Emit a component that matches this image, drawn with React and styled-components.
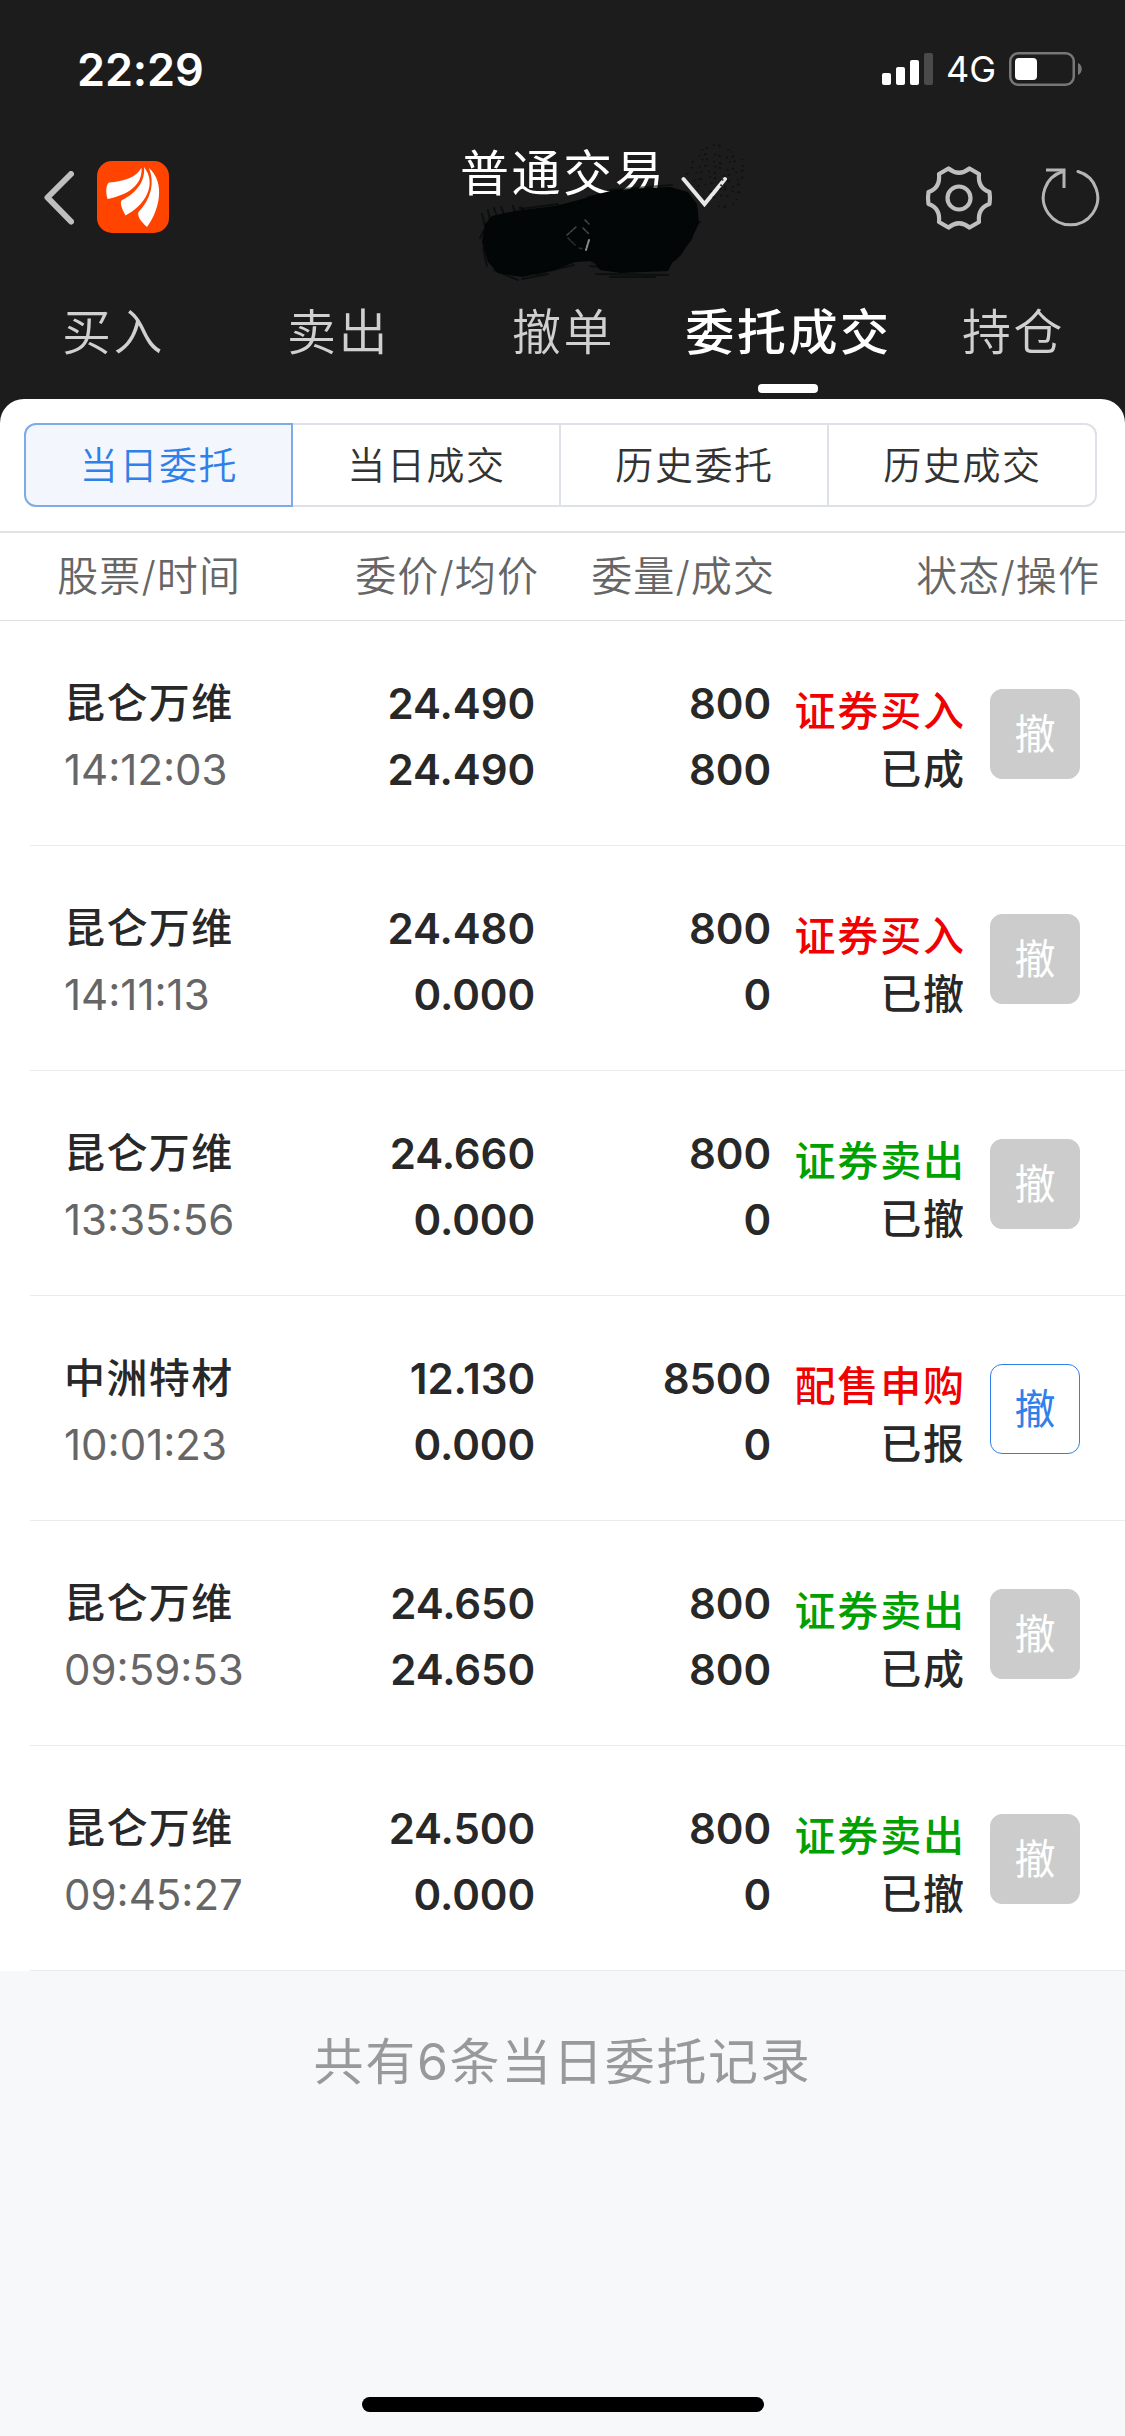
import React, { useState } from 'react';
import styled, { createGlobalStyle } from 'styled-components';

const tabs = ['买入', '卖出', '撤单', '委托成交', '持仓'];
const segments = ['当日委托', '当日成交', '历史委托', '历史成交'];

const orders = [
  { id: 1, name: '昆仑万维', time: '14:12:03', price: '24.490', avg: '24.490', qty: '800', filled: '800', side: 'buy', type: '证券买入', status: '已成' },
  { id: 2, name: '昆仑万维', time: '14:11:13', price: '24.480', avg: '0.000', qty: '800', filled: '0', side: 'buy', type: '证券买入', status: '已撤' },
  { id: 3, name: '昆仑万维', time: '13:35:56', price: '24.660', avg: '0.000', qty: '800', filled: '0', side: 'sell', type: '证券卖出', status: '已撤' },
  { id: 4, name: '中洲特材', time: '10:01:23', price: '12.130', avg: '0.000', qty: '8500', filled: '0', side: 'buy', type: '配售申购', status: '已报', open: true },
  { id: 5, name: '昆仑万维', time: '09:59:53', price: '24.650', avg: '24.650', qty: '800', filled: '800', side: 'sell', type: '证券卖出', status: '已成' },
  { id: 6, name: '昆仑万维', time: '09:45:27', price: '24.500', avg: '0.000', qty: '800', filled: '0', side: 'sell', type: '证券卖出', status: '已撤' },
];

function App() {

  const [activeTab, setActiveTab] = useState('委托成交');
  const [activeSegment, setActiveSegment] = useState('当日委托');

  return (
    <Screen>
      <GlobalStyle />
      <StatusBar>
        <Clock>22:29</Clock>
        <StatusIcons>
          <SignalIcon />
          <Network>4G</Network>
          <BatteryIcon />
        </StatusIcons>
      </StatusBar>

      <Header>
        <BackIcon />
        <LogoIcon />
        <Title>普通交易</Title>
        <ChevronIcon />
        <GearIcon />
        <RefreshIcon />
        <Scribble />
      </Header>

      <Tabs>
        {tabs.map((tab) => (
          <Tab key={tab} $active={tab === activeTab} onClick={() => setActiveTab(tab)}>
            {tab}
          </Tab>
        ))}
      </Tabs>

      <Panel>
        <Segments>
          {segments.map((item) => (
            <Segment key={item} $active={item === activeSegment} onClick={() => setActiveSegment(item)}>
              {item}
            </Segment>
          ))}
        </Segments>

        <TableHead>
          <span>股票/时间</span>
          <span>委价/均价</span>
          <span>委量/成交</span>
          <span>状态/操作</span>
        </TableHead>

        {orders.map((order) => (
          <Row key={order.id}>
            <Cell $left>
              <Name>{order.name}</Name>
              <Time>{order.time}</Time>
            </Cell>
            <Cell>
              <Num>{order.price}</Num>
              <Num>{order.avg}</Num>
            </Cell>
            <Cell>
              <Num>{order.qty}</Num>
              <Num>{order.filled}</Num>
            </Cell>
            <StatusCell>
              <Side $side={order.side}>{order.type}</Side>
              <div>{order.status}</div>
            </StatusCell>
            <CancelButton disabled={!order.open}>撤</CancelButton>
          </Row>
        ))}
      </Panel>

      <Summary>共有6条当日委托记录</Summary>
      <HomeIndicator />
    </Screen>
  );
}

function SignalIcon() {
  return (
    <svg width="51" height="33" viewBox="0 0 51 33" fill="#fff">
      <rect x="0" y="20" width="9" height="12" rx="2" />
      <rect x="14" y="14" width="9" height="18" rx="2" />
      <rect x="28" y="7" width="9" height="25" rx="2" />
      <rect x="42" y="0" width="9" height="32" rx="2" fill="#4a4a4a" />
    </svg>
  );
}

function BatteryIcon() {
  return (
    <svg width="73" height="34" viewBox="0 0 73 34">
      <rect x="1.25" y="1.25" width="63.5" height="31.5" rx="8" fill="none" stroke="#777" strokeWidth="2.5" />
      <rect x="6" y="6" width="22" height="22" rx="4" fill="#fff" />
      <path d="M69 11c5 2 5 10 0 12z" fill="#777" />
    </svg>
  );
}

function BackIcon() {
  return (
    <svg width="30" height="54" viewBox="0 0 30 54" fill="none" stroke="#bfbfbf" strokeWidth="6" strokeLinecap="round" strokeLinejoin="round">
      <path d="M27 3L3.500 26.500L27 50.500" />
    </svg>
  );
}

function LogoIcon() {
  return (
    <Logo viewBox="0 0 72 72">
      <rect width="72" height="72" rx="15" fill="#ff4400" />
      <g fill="#fff">
        <path d="M44.500 6.500C40 16 27 20.500 12 21.500C9 23.500 8.500 31 10.500 38C31 34 46 24 44.500 6.500z" />
        <path d="M47 6C48.500 21 39 32 24.500 39.500C22.500 43 25.500 48.500 28.500 54.500C47 45 61 24 47 6z" />
        <path d="M52 7C58 22 54 38 41.500 51C40 55 44 61 50 66C62 50 69 22 52 7z" />
      </g>
    </Logo>
  );
}

function ChevronIcon() {
  return (
    <Chevron viewBox="0 0 46 32" fill="none" stroke="#e8e8e8" strokeWidth="4" strokeLinecap="round">
      <path d="M2.500 3L23.500 28L44 3" />
    </Chevron>
  );
}

function GearIcon() {
  return (
    <Gear viewBox="0 0 68 68" fill="none" stroke="#bfbfbf" strokeWidth="4.200" strokeLinejoin="round">
      <path d="M23.500 4.500Q34 13 44.500 4.500L54 10Q52.500 24 64.500 28Q65.500 34 64.500 40Q52.500 44 54 58L44.500 63.500Q34 55 23.500 63.500L14 58Q15.500 44 3.500 40Q2.500 34 3.500 28Q15.500 24 14 10Z" />
      <circle cx="34" cy="34" r="11.500" />
    </Gear>
  );
}

function RefreshIcon() {
  return (
    <Refresh viewBox="0 0 60 60" fill="none" stroke="#b5b5b5" strokeWidth="3">
      <path d="M37 4.500A27.200 27.200 0 1 1 22 4.500" strokeLinecap="round" />
      <path d="M5 3H23V21" />
    </Refresh>
  );
}

function Scribble() {
  return (
    <ScribbleSvg viewBox="0 0 290 160">
      <path
        fill="#020607"
        d="M12 112L15 94L22 86L45 81L85 76L110 70L128 64L145 60L175 58L200 57L218 62L227 74L229 93L222 108L211 125L202 133L198 141L150 143L130 140L123 131L105 132L85 140L52 147L28 143L18 132Z"
      />
      <g fill="none" stroke="#020607" strokeOpacity="0.6" strokeWidth="2" strokeLinecap="round">
        <path d="M15 96L12 84M20 90L18 80M27 86L24 78M34 84L31 77M45 82L43 76M54 80L50 77" />
        <path d="M50 79L88 74M95 75L128 65M118 67L175 58M140 60L202 55" />
        <path d="M14 100L10 108M13 118L17 136M24 140L48 150M52 149L78 144M66 144L104 135" />
        <path d="M120 136L160 140M126 144L198 145M140 147L185 147M122 132L150 134M205 130L222 108M212 100L230 92" />
      </g>
      <g fill="none" stroke="#8a8e8f" strokeWidth="1.500" strokeLinecap="round" strokeOpacity="0.5" strokeDasharray="3 1.500">
        <path d="M115 90L119 94M106 97L97 105M113 98L119 104" />
        <path d="M119 110L116 120" strokeOpacity="1" strokeWidth="2" />
        <path d="M98 108L105 115M109 118L113 119" strokeOpacity="0.3" />
      </g>
      <g fill="none" stroke="#0e1010" strokeOpacity="0.8" strokeWidth="1.800" strokeLinecap="round" strokeDasharray="0.500 4 1 7 0.500 5 1.500 9">
        <path d="M232 20L246 14L262 22" />
        <path d="M224 27L240 23L256 28L270 25" strokeDashoffset="7" />
        <path d="M217 33L235 29L252 34L275 29" strokeDashoffset="13" />
        <path d="M220 38L240 35L258 40L276 35" strokeDashoffset="3" />
        <path d="M217 44L238 41L256 46L274 40" strokeDashoffset="19" />
        <path d="M222 51L240 47L262 52L276 46" strokeDashoffset="10" />
        <path d="M228 56L244 53L260 58L274 52" strokeDashoffset="5" />
        <path d="M238 62L252 59L272 63" strokeDashoffset="16" />
        <path d="M240 68L254 65L268 70" strokeDashoffset="1" />
        <path d="M244 76L260 77L264 73" strokeDashoffset="8" />
      </g>
    </ScribbleSvg>
  );
}


const GlobalStyle = createGlobalStyle`
  *{
    box-sizing: border-box;
  }
  body{
    margin: 0;
    background: #f7f8fa;
    font-family: Inter, 'Noto Sans CJK SC', sans-serif;
  }
  button{
    font-family: inherit;
    cursor: pointer;
  }
`;

const Screen = styled.div`
  width: 1125px;
  height: 2436px;
  display: flex;
  flex-direction: column;
  overflow: hidden;
  background: #1c1c1c;
`;

const StatusBar = styled.div`
  height: 138px;
  display: flex;
  align-items: center;
  justify-content: space-between;
  padding: 0 43px 0 77px;
  color: #fff;
`;

const Clock = styled.div`
  font-size: 45px;
  font-weight: 600;
  letter-spacing: -0.1px;
`;

const StatusIcons = styled.div`
  display: flex;
  align-items: center;
`;

const Network = styled.span`
  font-size: 36px;
  margin: 0 14px 0 13px;
  width: 49px;
`;

const Header = styled.div`
  position: relative;
  height: 147px;
  display: flex;
  align-items: flex-start;
  padding: 33px 24px 0 44px;
`;

const Logo = styled.svg`
  width: 72px;
  height: 72px;
  margin: -10px 0 0 23px;
`;

const Title = styled.h1`
  margin: -27px 0 0 291px;
  font-size: 49px;
  line-height: 60px;
  font-weight: 400;
  letter-spacing: 2.6px;
  color: #fff;
`;

const Chevron = styled.svg`
  width: 46px;
  height: 32px;
  margin: 5px 0 0 15px;
`;

const Gear = styled.svg`
  width: 68px;
  height: 68px;
  margin: -7px 0 0 auto;
`;

const Refresh = styled.svg`
  width: 60px;
  height: 60px;
  margin: -4px 0 0 48px;
`;

const ScribbleSvg = styled.svg`
  position: absolute;
  left: 470px;
  top: -8px;
  width: 290px;
  height: 160px;
`;

const Tabs = styled.div`
  height: 114px;
  display: grid;
  grid-template-columns: repeat(5, 1fr);
`;

const Tab = styled.div`
  display: flex;
  flex-direction: column;
  align-items: center;
  padding-top: 13px;
  font-size: 49px;
  line-height: 70px;
  letter-spacing: 2.6px;
  text-indent: 2px;
  white-space: nowrap;
  font-weight: ${({ $active }) => ($active ? 500 : 350)};
  color: ${({ $active }) => ($active ? '#fff' : '#d0d0d0')};

  &::after{
    content: '';
    width: 60px;
    height: 9px;
    margin-top: 16px;
    border-radius: 4px;
    background: ${({ $active }) => ($active ? '#fff' : 'transparent')};
  }
`;

const Panel = styled.div`
  background: #fff;
  border-radius: 24px 24px 0 0;
`;

const Segments = styled.div`
  display: grid;
  grid-template-columns: 269px 268px 268px 268px;
  padding: 24px;
  border-bottom: 2px solid #e3e3e5;
`;

const Segment = styled.div`
  height: 84px;
  line-height: 81px;
  text-align: center;
  font-size: 38px;
  font-weight: 350;
  letter-spacing: 1.6px;
  text-indent: 1px;
  color: ${({ $active }) => ($active ? '#2f80e8' : '#333')};
  background: ${({ $active }) => ($active ? '#f3f7fd' : '#fff')};
  border: 2px solid ${({ $active }) => ($active ? '#7eabe8' : '#dfe1e8')};
  border-left-width: ${({ $active }) => ($active ? '2px' : '0')};

  &:first-child{
    border-radius: 12px 0 0 12px;
  }
  &:last-child{
    border-radius: 0 12px 12px 0;
  }
`;

const TableHead = styled.div`
  height: 88px;
  display: grid;
  grid-template-columns: 241px 298px 236px 1fr;
  padding-right: 25px;
  border-bottom: 1px solid #e0e0e0;
  font-size: 41px;
  line-height: 87px;
  font-weight: 350;
  letter-spacing: 1.1px;
  text-align: right;
  color: #666;
`;

const Row = styled.div`
  height: 225px;
  margin-left: 30px;
  display: grid;
  grid-template-columns: 270px 201px 236px 195px 90px;
  align-items: start;
  padding-left: 34px;
  border-bottom: 1px solid #ebebeb;
  color: #282828;
`;

const Cell = styled.div`
  padding-top: 50px;
  line-height: 66px;
  text-align: ${({ $left }) => ($left ? 'left' : 'right')};
`;

const Name = styled.div`
  height: 66px;
  font-size: 41px;
  line-height: 65px;
  font-weight: 500;
  letter-spacing: 1.4px;
`;

const Time = styled.div`
  font-size: 42px;
  color: #666;
`;

const Num = styled.div`
  font-size: 42px;
  font-weight: 600;
  letter-spacing: -0.1px;
`;

const StatusCell = styled.div`
  padding-top: 61px;
  font-size: 41px;
  line-height: 58px;
  font-weight: 500;
  letter-spacing: 1.9px;
  text-align: right;
  white-space: nowrap;
`;

const Side = styled.div`
  color: ${({ $side }) => ($side === 'buy' ? '#f00000' : '#00a000')};
`;

const CancelButton = styled.button`
  width: 90px;
  height: 90px;
  margin: 68px 0 0 24px;
  padding: 0 0 7px;
  border: 1px solid #2f80e8;
  border-radius: 12px;
  background: #fff;
  color: #2f80e8;
  font-size: 41px;

  &:disabled{
    border-color: #ccc;
    background: #ccc;
    color: #fff;
  }
`;

const Summary = styled.div`
  flex: 1;
  padding-top: 56px;
  background: #f7f8fa;
  color: #999;
  text-align: center;
  font-size: 50px;
  line-height: 70px;
  font-weight: 400;
  letter-spacing: 1.7px;
`;

const HomeIndicator = styled.div`
  height: 39px;
  display: flex;
  justify-content: center;
  background: #f7f8fa;

  &::after{
    content: '';
    width: 402px;
    height: 15px;
    border-radius: 8px;
    background: #000;
  }
`;

export default App;
